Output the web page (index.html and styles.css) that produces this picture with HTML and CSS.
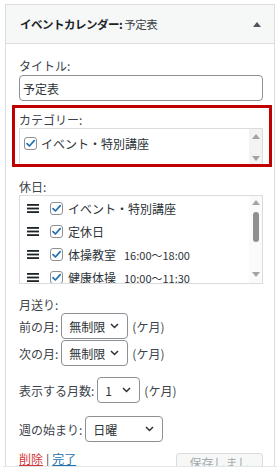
FILE: index.html
```html
<!DOCTYPE html>
<html lang="ja">
<head>
<meta charset="utf-8">
<title>イベントカレンダー</title>
<link rel="stylesheet" href="styles.css">
</head>
<body>
<div class="frame">
  <div class="widget">
    <div class="widget-top">
      <h3 class="widget-title"><strong>イベントカレンダー:</strong> <span class="instance">予定表</span></h3>
      <svg class="toggle" width="8" height="5" viewBox="0 0 8 5"><polygon points="4,0 8,5 0,5" fill="#50575e"/></svg>
    </div>
    <div class="widget-inside">
      <label class="lbl lbl-title">タイトル:</label>
      <div class="input">予定表</div>

      <div class="highlight">
        <label class="lbl lbl-cat">カテゴリー:</label>
        <div class="listbox cat-list">
          <ul class="items cat-items">
            <li class="item">
              <span class="cb"><svg width="11" height="11" viewBox="0 0 11 11"><path d="M2 5.6 L4.4 8 L9.2 2.6" fill="none" stroke="#2271b1" stroke-width="1.7" stroke-linecap="round" stroke-linejoin="round"/></svg></span>
              <span class="txt">イベント・特別講座</span>
            </li>
          </ul>
          <div class="sbar sbar-cat">
            <svg class="arr" width="8" height="5" viewBox="0 0 8 5"><polygon points="4,0 8,5 0,5" fill="#a3a3a3"/></svg>
            <svg class="arr arr-down" width="8" height="5" viewBox="0 0 8 5"><polygon points="0,0 8,0 4,5" fill="#a3a3a3"/></svg>
          </div>
        </div>
      </div>

      <label class="lbl lbl-hol">休日:</label>
      <div class="listbox hol-list">
        <ul class="items hol-items">
          <li class="item hitem">
            <svg class="handle" width="12" height="9" viewBox="0 0 12 9"><rect x="0" y="0" width="12" height="1.8" fill="#1d2327"/><rect x="0" y="3.6" width="12" height="1.8" fill="#1d2327"/><rect x="0" y="7.2" width="12" height="1.8" fill="#1d2327"/></svg>
            <span class="cb"><svg width="11" height="11" viewBox="0 0 11 11"><path d="M2 5.6 L4.4 8 L9.2 2.6" fill="none" stroke="#2271b1" stroke-width="1.7" stroke-linecap="round" stroke-linejoin="round"/></svg></span>
            <span class="txt">イベント・特別講座</span>
          </li>
          <li class="item hitem">
            <svg class="handle" width="12" height="9" viewBox="0 0 12 9"><rect x="0" y="0" width="12" height="1.8" fill="#1d2327"/><rect x="0" y="3.6" width="12" height="1.8" fill="#1d2327"/><rect x="0" y="7.2" width="12" height="1.8" fill="#1d2327"/></svg>
            <span class="cb"><svg width="11" height="11" viewBox="0 0 11 11"><path d="M2 5.6 L4.4 8 L9.2 2.6" fill="none" stroke="#2271b1" stroke-width="1.7" stroke-linecap="round" stroke-linejoin="round"/></svg></span>
            <span class="txt">定休日</span>
          </li>
          <li class="item hitem">
            <svg class="handle" width="12" height="9" viewBox="0 0 12 9"><rect x="0" y="0" width="12" height="1.8" fill="#1d2327"/><rect x="0" y="3.6" width="12" height="1.8" fill="#1d2327"/><rect x="0" y="7.2" width="12" height="1.8" fill="#1d2327"/></svg>
            <span class="cb"><svg width="11" height="11" viewBox="0 0 11 11"><path d="M2 5.6 L4.4 8 L9.2 2.6" fill="none" stroke="#2271b1" stroke-width="1.7" stroke-linecap="round" stroke-linejoin="round"/></svg></span>
            <span class="txt">体操教室</span><span class="time">16:00〜18:00</span>
          </li>
          <li class="item hitem">
            <svg class="handle" width="12" height="9" viewBox="0 0 12 9"><rect x="0" y="0" width="12" height="1.8" fill="#1d2327"/><rect x="0" y="3.6" width="12" height="1.8" fill="#1d2327"/><rect x="0" y="7.2" width="12" height="1.8" fill="#1d2327"/></svg>
            <span class="cb"><svg width="11" height="11" viewBox="0 0 11 11"><path d="M2 5.6 L4.4 8 L9.2 2.6" fill="none" stroke="#2271b1" stroke-width="1.7" stroke-linecap="round" stroke-linejoin="round"/></svg></span>
            <span class="txt">健康体操</span><span class="time">10:00〜11:30</span>
          </li>
        </ul>
        <div class="sbar sbar-hol">
          <svg class="arr" width="8" height="5" viewBox="0 0 8 5"><polygon points="4,0 8,5 0,5" fill="#a3a3a3"/></svg>
          <span class="thumb"></span>
          <svg class="arr arr-down" width="8" height="5" viewBox="0 0 8 5"><polygon points="0,0 8,0 4,5" fill="#a3a3a3"/></svg>
        </div>
      </div>

      <label class="lbl lbl-month">月送り:</label>
      <div class="row row-prev">
        <span class="lbl-inline">前の月:</span>
        <span class="select sel-month"><span>無制限</span><svg width="9" height="6" viewBox="0 0 9 6"><path d="M1 1 L4.5 4.5 L8 1" fill="none" stroke="#2c3338" stroke-width="1.5"/></svg></span>
        <span class="unit">(ケ月)</span>
      </div>
      <div class="row row-next">
        <span class="lbl-inline">次の月:</span>
        <span class="select sel-month"><span>無制限</span><svg width="9" height="6" viewBox="0 0 9 6"><path d="M1 1 L4.5 4.5 L8 1" fill="none" stroke="#2c3338" stroke-width="1.5"/></svg></span>
        <span class="unit">(ケ月)</span>
      </div>

      <div class="row row-count">
        <span class="lbl-inline">表示する月数:</span>
        <span class="select sel-count"><span>1</span><svg width="9" height="6" viewBox="0 0 9 6"><path d="M1 1 L4.5 4.5 L8 1" fill="none" stroke="#2c3338" stroke-width="1.5"/></svg></span>
        <span class="unit">(ケ月)</span>
      </div>

      <div class="row row-week">
        <span class="lbl-inline">週の始まり:</span>
        <span class="select sel-week"><span>日曜</span><svg width="9" height="6" viewBox="0 0 9 6"><path d="M1 1 L4.5 4.5 L8 1" fill="none" stroke="#2c3338" stroke-width="1.5"/></svg></span>
      </div>

      <div class="footer">
        <div class="links"><a class="del">削除</a><span class="sep">|</span><a class="done">完了</a></div>
        <button class="save" disabled>保存しました</button>
      </div>
    </div>
  </div>
</div>
<div class="cut"></div>
</body>
</html>
```
FILE: styles.css
```css
* { box-sizing: border-box; margin: 0; padding: 0; }
html, body { background: #fff; }
body {
  font-family: "Noto Sans CJK JP", "Noto Sans", sans-serif;
  font-size: 12px;
  color: #3c434a;
  width: 280px;
  height: 475px;
  overflow: hidden;
}
.frame { height: 466px; overflow: hidden; padding: 4px 5px 0 5px; }
.widget { border: 1px solid #dcdcde; border-bottom: 0; height: 100%; background: #fff; }
.widget-top {
  height: 39px;
  background: #f6f7f7;
  border-bottom: 1px solid #dcdcde;
  display: flex;
  align-items: center;
  justify-content: space-between;
  padding: 0 13px 0 14px;
}
.widget-title { font-size: 11.5px; font-weight: 400; color: #1d2327; line-height: 18px; letter-spacing: -0.5px; }
.widget-title strong { font-weight: 700; }
.widget-title .instance { color: #3c434a; }
.toggle { display: block; }

.widget-inside { padding: 0 11px 0 13px; }
.lbl { display: block; }
.lbl-title { margin-top: 13px; line-height: 18px; }
.input {
  height: 26px;
  border: 1px solid #8c8f94;
  border-radius: 4px;
  padding: 0 3px;
  display: flex;
  align-items: center;
  color: #2c3338;
  font-size: 12px;
}

.highlight {
  margin: 4px -9px 0 -7px;
  border: 3px solid #c00000;
  padding: 4px 6px 0 4px;
}
.lbl-cat { line-height: 16px; }
.listbox { display: flex; border: 1px solid #dcdcde; background: #fff; }
.cat-list { height: 36px; border-bottom: 0; }
.items { list-style: none; flex: 1; min-width: 0; }
.cat-items { padding-top: 3px; }
.item { display: flex; align-items: center; height: 22px; padding-left: 4px; color: #2c3338; white-space: nowrap; }
.cb {
  width: 13px; height: 13px;
  border: 1px solid #8c8f94;
  border-radius: 3px;
  background: #fff;
  display: flex; align-items: center; justify-content: center;
  flex: none;
  margin-right: 4px;
}
.cb svg { display: block; }

.sbar { width: 13px; flex: none; display: flex; flex-direction: column; align-items: center; }
.sbar-cat { background: #f3f3f3; padding: 5px 0 3px; }
.arr { display: block; }
.arr-down { margin-top: auto; }
.sbar-hol { background: #fafafa; padding: 4px 0 6px; }
.thumb { display: block; width: 6px; height: 30px; border-radius: 3px; background: #8f8f8f; margin-top: 7px; }

.lbl-hol { margin-top: 11px; line-height: 17px; }
.hol-list { height: 89px; overflow: hidden; }
.hol-items { padding-top: 1px; }
.hitem { height: 23px; padding-left: 7px; }
.handle { display: block; flex: none; margin-right: 11px; }
.hitem .cb { margin-right: 5px; }
.time { font-size: 11px; margin-left: 8px; }

.lbl-month { margin-top: 13px; line-height: 16px; }
.row { display: flex; align-items: center; height: 26px; gap: 3px; }
.row-next { margin-top: 1px; }
.row-count { margin-top: 11px; }
.row-week { margin-top: 13px; }
.select {
  height: 26px;
  border: 1px solid #8c8f94;
  border-radius: 4px;
  background: #fff;
  color: #2c3338;
  display: inline-flex;
  align-items: center;
  justify-content: space-between;
  padding: 0 8px 0 7px;
  flex: none;
}
.select svg { display: block; }
.sel-month { width: 67px; }
.sel-count { width: 43px; }
.sel-week { width: 78px; }
.unit { margin-left: 1px; }

.footer { margin-top: 10px; display: flex; justify-content: space-between; align-items: flex-start; }
.links { line-height: 14px; display: flex; }
.del { color: #d63638; text-decoration: underline; }
.sep { color: #3c434a; margin: 0 3px; }
.done { color: #2271b1; text-decoration: underline; }
.save {
  margin-top: 1px;
  height: 30px;
  width: 87px;
  border: 1px solid #dcdcde;
  border-radius: 3px;
  background: #f6f7f7;
  color: #a7aaad;
  font-family: inherit;
  font-size: 12px;
  padding: 0 7px;
}
.cut { height: 1px; background: #e3e7ec; margin: 0 3px; }
```
